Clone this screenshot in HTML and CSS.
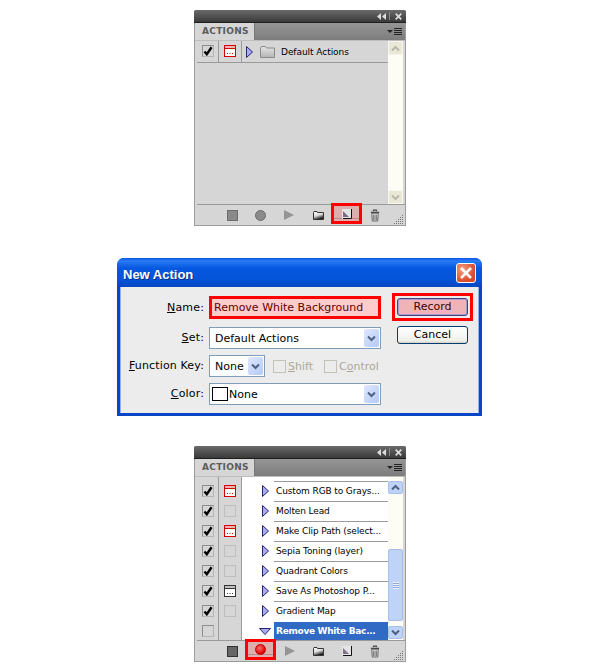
FILE: index.html
```html
<!DOCTYPE html>
<html>

<head>
    <meta charset="utf-8">
    <title>New Action</title>
    <link rel="stylesheet" href="styles.css">
</head>

<body>
    <!-- shared icons -->
    <svg class="defs" width="0" height="0">
        <linearGradient id="folder-fill" x1="0" y1="0" x2="0.4" y2="1">
            <stop offset="0" stop-color="#fff" />
            <stop offset="0.55" stop-color="#ddd" />
            <stop offset="1" stop-color="#222" />
        </linearGradient>
        <linearGradient id="set-fill" x1="0" y1="0" x2="0" y2="1">
            <stop offset="0" stop-color="#e6e6e6" />
            <stop offset="1" stop-color="#b4b4b4" />
        </linearGradient>
        <symbol id="i-check" viewBox="0 0 10 10">
            <path d="M1.5 5.5 L3.8 8.2 L8.6 1.2" fill="none" stroke="#000" stroke-width="2.4" />
        </symbol>
        <symbol id="i-dlg" viewBox="0 0 12 12">
            <rect x="0.5" y="0.5" width="11" height="11" fill="#fff" stroke="currentColor" />
            <rect x="1" y="1" width="10" height="2" fill="currentColor" opacity="0.3" />
            <path d="M1 3.5H11" stroke="currentColor" />
            <path d="M3 8.5h1M5.5 8.5h1M8 8.5h1" stroke="currentColor" />
        </symbol>
        <symbol id="i-tri" viewBox="0 0 7 12">
            <path d="M0.5 0.5 L6.5 6 L0.5 11.5 Z" fill="#aaaaf0" stroke="#26266e" />
        </symbol>
        <symbol id="i-tri-down" viewBox="0 0 12 7">
            <path d="M0.5 0.5 L11.5 0.5 L6 6.5 Z" fill="#aaaaf0" stroke="#26266e" />
        </symbol>
        <symbol id="i-arrow" viewBox="0 0 9 7">
            <path d="M1 1.5 L4.5 5 L8 1.5" fill="none" stroke="#4d6185" stroke-width="2" />
        </symbol>
        <symbol id="i-new" viewBox="0 0 10 10">
            <rect width="10" height="10" fill="#e4e4e4" />
            <path d="M1 2 L7 8 H1 Z" fill="#7d6f8a" />
            <path d="M9.5 0V9.5H1" fill="none" stroke="#111" />
        </symbol>
        <symbol id="i-set-folder" viewBox="0 0 15 12">
            <path d="M0.5 2 L1.5 0.5 H5.5 L6.5 2 H14.5 V11.5 H0.5 Z" fill="url(#set-fill)" stroke="#8a8a8a" />
        </symbol>
        <symbol id="i-folder" viewBox="0 0 11 9">
            <path d="M0.5 1.5 L1 0.5 H4 L4.5 1.5 H10.5 V8.5 H0.5 Z" fill="url(#folder-fill)" stroke="#333" />
        </symbol>
        <symbol id="i-trash" viewBox="0 0 11 14">
            <path d="M1 3.5 H10 M3.5 2 L4 1 H7 L7.5 2" fill="none" stroke="#444" stroke-width="1.4" />
            <path d="M2 4.5 H9 L8.5 13 H2.5 Z" fill="#eee" stroke="#555" />
            <path d="M4 6V12M5.5 6V12M7 6V12" stroke="#666" />
        </symbol>
        <symbol id="i-grip" viewBox="0 0 10 10">
            <path d="M8 1h1v1H8zM6 3h1v1H6zM8 3h1v1H8zM4 5h1v1H4zM6 5h1v1H6zM8 5h1v1H8zM2 7h1v1H2zM4 7h1v1H4zM6 7h1v1H6zM8 7h1v1H8zM0 9h1v1H0zM2 9h1v1H2zM4 9h1v1H4zM6 9h1v1H6zM8 9h1v1H8z" fill="#777" />
        </symbol>
        <symbol id="i-collapse" viewBox="0 0 9 7">
            <path d="M4 0V7L0 3.5ZM9 0V7L5 3.5Z" fill="#ddd" />
        </symbol>
        <symbol id="i-x" viewBox="0 0 7 7">
            <path d="M0.7 0.7 L6.3 6.3 M6.3 0.7 L0.7 6.3" stroke="#ddd" stroke-width="1.7" />
        </symbol>
    </svg>

    <!-- first panel -->
    <div class="panel">
        <div class="titlebar">
            <svg class="collapse"><use href="#i-collapse" /></svg><span class="bar-sep"></span><svg class="close"><use href="#i-x" /></svg>
        </div>
        <div class="tabrow">
            <div class="tab">ACTIONS</div>
            <div class="menu"><span class="menu-tri"></span><span class="menu-lines"></span></div>
        </div>
        <div class="panel-body">
            <div class="list">
                <div class="row row-set">
                    <div class="cell-check"><span class="box"><svg><use href="#i-check" /></svg></span></div>
                    <div class="cell-dlg"><svg class="dlg red"><use href="#i-dlg" /></svg></div>
                    <svg class="tri"><use href="#i-tri" /></svg>
                    <svg class="set-folder"><use href="#i-set-folder" /></svg>
                    <span class="set-name">Default Actions</span>
                </div>
            </div>
            <div class="scroll">
                <div class="sbtn off"><svg class="up"><use href="#i-arrow" /></svg></div>
                <div class="track"></div>
                <div class="sbtn off"><svg><use href="#i-arrow" /></svg></div>
            </div>
        </div>
        <div class="footer">
            <div class="fbtn"><span class="stop"></span></div>
            <div class="fbtn"><span class="rec"></span></div>
            <div class="fbtn"><span class="play"></span></div>
            <div class="fbtn"><svg class="ficon"><use href="#i-folder" /></svg></div>
            <div class="fbtn hl"><svg class="ficon-new"><use href="#i-new" /></svg></div>
            <div class="fbtn"><svg class="ficon-trash"><use href="#i-trash" /></svg></div>
            <svg class="grip"><use href="#i-grip" /></svg>
        </div>
    </div>

    <!-- dialog -->
    <div class="dialog">
        <div class="dialog-title">
            <span class="dialog-name">New Action</span>
            <div class="x-btn"><svg width="14" height="14" viewBox="0 0 14 14"><path d="M2 2 L12 12 M12 2 L2 12" stroke="#fff" stroke-width="2.6" /></svg></div>
        </div>
        <div class="dialog-body">
            <div class="form">
                <label class="name-label"><u>N</u>ame:</label>
                <div class="name-input">Remove White Background</div>

                <label><u>S</u>et:</label>
                <div class="field">Default Actions<span class="drop"><svg><use href="#i-arrow" /></svg></span></div>

                <label><u>F</u>unction Key:</label>
                <div class="fkey-row">
                    <div class="field fkey">None<span class="drop"><svg><use href="#i-arrow" /></svg></span></div>
                    <span class="opt"><span class="optbox"></span><span><u>S</u>hift</span></span>
                    <span class="opt"><span class="optbox"></span><span>C<u>o</u>ntrol</span></span>
                </div>

                <label><u>C</u>olor:</label>
                <div class="field color-field"><span class="swatch"></span>None<span class="drop"><svg><use href="#i-arrow" /></svg></span></div>
            </div>
            <div class="buttons">
                <div class="record-wrap"><div class="btn btn-record">Record</div></div>
                <div class="btn btn-cancel">Cancel</div>
            </div>
        </div>
    </div>

    <!-- second panel -->
    <div class="panel">
        <div class="titlebar">
            <svg class="collapse"><use href="#i-collapse" /></svg><span class="bar-sep"></span><svg class="close"><use href="#i-x" /></svg>
        </div>
        <div class="tabrow">
            <div class="tab">ACTIONS</div>
            <div class="menu"><span class="menu-tri"></span><span class="menu-lines"></span></div>
        </div>
        <div class="panel-body">
            <div class="list list-scrolled">
                <div class="row action">
                    <div class="cell-check"><span class="box"><svg><use href="#i-check" /></svg></span></div>
                    <div class="cell-dlg"><svg class="dlg red"><use href="#i-dlg" /></svg></div>
                    <svg class="tri"><use href="#i-tri" /></svg>
                    <span class="name">Custom RGB to Grays...</span>
                </div>
                <div class="row action">
                    <div class="cell-check"><span class="box"><svg><use href="#i-check" /></svg></span></div>
                    <div class="cell-dlg"><span class="box"></span></div>
                    <svg class="tri"><use href="#i-tri" /></svg>
                    <span class="name">Molten Lead</span>
                </div>
                <div class="row action">
                    <div class="cell-check"><span class="box"><svg><use href="#i-check" /></svg></span></div>
                    <div class="cell-dlg"><svg class="dlg red"><use href="#i-dlg" /></svg></div>
                    <svg class="tri"><use href="#i-tri" /></svg>
                    <span class="name">Make Clip Path (select...</span>
                </div>
                <div class="row action">
                    <div class="cell-check"><span class="box"><svg><use href="#i-check" /></svg></span></div>
                    <div class="cell-dlg"><span class="box"></span></div>
                    <svg class="tri"><use href="#i-tri" /></svg>
                    <span class="name">Sepia Toning (layer)</span>
                </div>
                <div class="row action">
                    <div class="cell-check"><span class="box"><svg><use href="#i-check" /></svg></span></div>
                    <div class="cell-dlg"><span class="box"></span></div>
                    <svg class="tri"><use href="#i-tri" /></svg>
                    <span class="name">Quadrant Colors</span>
                </div>
                <div class="row action">
                    <div class="cell-check"><span class="box"><svg><use href="#i-check" /></svg></span></div>
                    <div class="cell-dlg"><svg class="dlg dark"><use href="#i-dlg" /></svg></div>
                    <svg class="tri"><use href="#i-tri" /></svg>
                    <span class="name">Save As Photoshop P...</span>
                </div>
                <div class="row action">
                    <div class="cell-check"><span class="box"><svg><use href="#i-check" /></svg></span></div>
                    <div class="cell-dlg"><span class="box"></span></div>
                    <svg class="tri"><use href="#i-tri" /></svg>
                    <span class="name">Gradient Map</span>
                </div>
                <div class="row action open">
                    <div class="cell-check"><span class="box"></span></div>
                    <div class="cell-dlg"></div>
                    <svg class="tri-down"><use href="#i-tri-down" /></svg>
                    <span class="name selected">Remove White Bac...</span>
                </div>
            </div>
            <div class="scroll scroll-on">
                <div class="sbtn"><svg class="up"><use href="#i-arrow" /></svg></div>
                <div class="track">
                    <div class="thumb"><span class="thumb-grip"></span></div>
                </div>
                <div class="sbtn"><svg><use href="#i-arrow" /></svg></div>
            </div>
        </div>
        <div class="footer">
            <div class="fbtn"><span class="stop dark-stop"></span></div>
            <div class="fbtn hl"><span class="rec rec-on"></span></div>
            <div class="fbtn"><span class="play"></span></div>
            <div class="fbtn"><svg class="ficon"><use href="#i-folder" /></svg></div>
            <div class="fbtn"><svg class="ficon-new"><use href="#i-new" /></svg></div>
            <div class="fbtn"><svg class="ficon-trash"><use href="#i-trash" /></svg></div>
            <svg class="grip"><use href="#i-grip" /></svg>
        </div>
    </div>
</body>

</html>
```

FILE: styles.css
```css
html {
    background-color: white;
}

body {
    margin: 0;
    padding-top: 10px;
    display: flex;
    flex-direction: column;
    align-items: center;
    font-family: "DejaVu Sans", sans-serif;
    color: #000;
}

svg {
    display: block;
}

.defs {
    position: absolute;
}

/* panels */
.panel {
    width: 212px;
    height: 216px;
    box-sizing: border-box;
    border: 1px solid #9c9c9c;
    border-top: none;
    background: #d6d6d6;
    display: flex;
    flex-direction: column;
    border-radius: 2px 2px 0 0;
}

.titlebar {
    height: 12px;
    margin: 0 -1px;
    background: linear-gradient(#6a6a6a, #3a3a3a);
    border-bottom: 1px solid #1e1e1e;
    display: flex;
    align-items: center;
    justify-content: flex-end;
    padding-right: 4px;
    flex: none;
    border-radius: 2px 2px 0 0;
}

.collapse {
    width: 9px;
    height: 7px;
    margin-right: 3px;
}

.bar-sep {
    width: 1px;
    height: 8px;
    background: #888;
    margin-right: 5px;
}

.close {
    width: 7px;
    height: 7px;
}

.tabrow {
    height: 17px;
    display: flex;
    background: linear-gradient(#969696, #7c7c7c);
    flex: none;
    border-bottom: 1px solid #bdbdbd;
}

.tab {
    width: 60px;
    background: #d6d6d6;
    color: #5c5c5c;
    font-size: 9px;
    font-weight: bold;
    line-height: 17px;
    padding-left: 7px;
    box-sizing: border-box;
    letter-spacing: 0.3px;
    border-right: 1px solid #777;
}

.menu {
    flex: 1;
    display: flex;
    align-items: center;
    justify-content: flex-end;
    padding-right: 3px;
}

.menu-tri {
    border: 3px solid transparent;
    border-top: 3px solid #222;
    border-bottom: none;
    margin-right: 1px;
}

.menu-lines {
    width: 8px;
    height: 7px;
    background: repeating-linear-gradient(#222 0 1px, transparent 1px 2px);
}

.panel-body {
    flex: 1;
    display: flex;
    min-height: 0;
}

.list {
    flex: 1;
    display: flex;
    flex-direction: column;
    margin-left: 2px;
}

.row {
    height: 20px;
    display: flex;
    align-items: center;
    font-size: 9px;
    flex: none;
}

.row-set {
    height: 21px;
    border-bottom: 1px solid #9a9a9a;
}

.cell-check,
.cell-dlg {
    height: 100%;
    display: flex;
    align-items: center;
    justify-content: center;
    box-sizing: border-box;
    border-right: 1px solid #9a9a9a;
    flex: none;
}

.cell-check {
    width: 22px;
}

.cell-dlg {
    width: 23px;
}

.box {
    width: 12px;
    height: 12px;
    margin-bottom: 1px;
    box-sizing: border-box;
    border: 1px solid #b4b4b4;
    border-top-color: #8c8c8c;
    border-left-color: #8c8c8c;
    display: block;
}

.box svg {
    width: 10px;
    height: 10px;
}

.cell-dlg .box {
    border: 1px solid #bdbdbd;
}

.dlg {
    width: 12px;
    height: 12px;
    margin-bottom: 1px;
}

.red {
    color: #d40000;
}

.dark {
    color: #333;
}

.tri {
    width: 7px;
    height: 12px;
    margin-left: 3px;
    flex: none;
}

.row-set .tri {
    margin-left: 4px;
}

.set-folder {
    width: 15px;
    height: 12px;
    margin-left: 7px;
}

.set-name {
    margin-left: 6px;
    font-size: 9px;
    letter-spacing: -0.05px;
    white-space: nowrap;
}

/* list after scrolling */
.list-scrolled {
    padding-top: 4px;
    background: linear-gradient(90deg, #d6d6d6 21px, #9a9a9a 21px 22px, #d6d6d6 22px 44px, #9a9a9a 44px 45px, #fff 45px);
}

.action {
    background: #fff;
}

.action .tri {
    margin-left: 20px;
}

.action .name {
    flex: 1;
    height: 100%;
    box-sizing: border-box;
    border-top: 1px solid #9a9a9a;
    margin-left: 5px;
    line-height: 18px;
    padding-left: 2px;
    letter-spacing: -0.12px;
    white-space: nowrap;
    align-self: stretch;
}

.action .cell-check,
.action .cell-dlg {
    background: #d6d6d6;
}

.tri-down {
    width: 12px;
    height: 7px;
    margin-left: 17px;
    flex: none;
}

.action .name.selected {
    background: #316ac5;
    color: #fff;
    font-weight: bold;
    margin-left: 3px;
    border-top: 1px solid #fff;
    letter-spacing: -0.3px;
}

/* scrollbars */
.scroll {
    width: 15px;
    margin-right: 2px;
    background: #fdfdf6;
    display: flex;
    flex-direction: column;
    flex: none;
}

.track {
    flex: 1;
    display: flex;
    flex-direction: column;
    justify-content: flex-end;
}

.sbtn {
    height: 14px;
    background: #e9e7d6;
    border: 1px solid #f6f6ea;
    box-sizing: border-box;
    border-radius: 2px;
    display: flex;
    align-items: center;
    justify-content: center;
    flex: none;
}

.sbtn svg {
    width: 9px;
    height: 7px;
}

.sbtn .up {
    transform: scaleY(-1);
}

.sbtn.off svg {
    opacity: 0.35;
    filter: grayscale(1);
}

.scroll-on {
    padding: 4px 0 1px;
}

.scroll-on .sbtn {
    height: 13px;
    background: #bfd2f7;
    border: 1px solid #a9bfe8;
}

.thumb {
    height: 72px;
    margin-bottom: 5px;
    background: #bfd2f7;
    border: 1px solid #a9bfe8;
    box-sizing: border-box;
    border-radius: 2px;
    display: flex;
    align-items: center;
    justify-content: center;
}

.thumb-grip {
    width: 6px;
    height: 7px;
    background: repeating-linear-gradient(#eef3fd 0 1px, #8fa8da 1px 2px);
}

/* footer */
.footer {
    height: 21px;
    flex: none;
    margin-left: 2px;
    border-top: 1px solid #9a9a9a;
    display: flex;
    align-items: center;
    padding-left: 21px;
    box-sizing: border-box;
    position: relative;
}

.fbtn {
    width: 28.6px;
    height: 100%;
    display: flex;
    align-items: center;
    justify-content: center;
    flex: none;
    box-sizing: border-box;
}

.fbtn.hl {
    width: 31px;
    height: 21px;
    align-self: flex-start;
    margin: -2px -1.2px 0;
    border: 3px solid #ff0000;
    background: linear-gradient(#dcaeae 0 12px, #b98d8d 12px 13px, #dcaeae 13px);
}

.stop {
    width: 9px;
    height: 9px;
    background: #8a8a8a;
    border: 1px solid #6c6c6c;
}

.dark-stop {
    background: #666;
    border-color: #333;
}

.rec {
    width: 9px;
    height: 9px;
    border-radius: 50%;
    background: #8a8a8a;
    border: 1px solid #6c6c6c;
}

.rec-on {
    background: radial-gradient(circle at 40% 35%, #ff6a6a, #e00000 70%);
    border-color: #c00000;
}

.play {
    border-left: 10px solid #949494;
    border-top: 5.5px solid transparent;
    border-bottom: 5.5px solid transparent;
}

.ficon {
    width: 11px;
    height: 9px;
}

.ficon-new {
    width: 10px;
    height: 10px;
}

.ficon-trash {
    width: 10px;
    height: 13px;
}

.grip {
    width: 10px;
    height: 10px;
    position: absolute;
    right: 1px;
    bottom: 1px;
}

/* dialog */
.dialog {
    width: 365px;
    height: 158px;
    margin: 32px 1px 30px 0;
    box-sizing: border-box;
    background: #0a45c8;
    padding: 0 3px 3px;
    border-radius: 7px 7px 0 0;
    display: flex;
    flex-direction: column;
    font-size: 11px;
}

.dialog-title {
    height: 29px;
    margin: 0 -3px;
    padding: 0 6px;
    background: linear-gradient(#0a56e6 0, #2a7bf5 10%, #0658e0 35%, #0453d8 75%, #0645c0 100%);
    border-radius: 7px 7px 0 0;
    color: #fff;
    font-family: "Liberation Sans", sans-serif;
    font-weight: bold;
    font-size: 13px;
    display: flex;
    align-items: center;
    justify-content: space-between;
    text-shadow: 1px 1px 0 #0a2f8c;
    flex: none;
}

.dialog-name {
    padding-top: 3px;
}

.x-btn {
    width: 20px;
    height: 20px;
    box-sizing: border-box;
    border: 1px solid #fff;
    border-radius: 3px;
    background: radial-gradient(circle at 30% 30%, #f0a080, #d9492a 70%);
    display: flex;
    align-items: center;
    justify-content: center;
}

.dialog-body {
    flex: 1;
    background: #ececec;
    display: flex;
    border: 1px solid #8fb0e8;
    border-top: none;
    border-bottom: none;
}

.form {
    display: grid;
    grid-template-columns: 83px 172px;
    grid-template-rows: 23px 30px 28px 28px;
    column-gap: 5px;
    padding-top: 9px;
    align-items: end;
}

.form label {
    text-align: right;
    line-height: 22px;
    letter-spacing: 0.15px;
    white-space: nowrap;
}

.form .name-label {
    line-height: 23px;
}

.name-input {
    height: 23px;
    box-sizing: border-box;
    border: 3px solid #ff0000;
    background: #ffcccc;
    color: #600000;
    line-height: 17px;
    padding-left: 2px;
    white-space: nowrap;
}

.field {
    height: 22px;
    box-sizing: border-box;
    border: 1px solid #7f9db9;
    background: #fff;
    display: flex;
    align-items: center;
    padding-left: 5px;
    white-space: nowrap;
}

.drop {
    margin-left: auto;
    width: 15px;
    height: 18px;
    margin-right: 1px;
    background: linear-gradient(135deg, #dfe8fd, #b4c9f5);
    border-radius: 2px;
    display: flex;
    align-items: center;
    justify-content: center;
    flex: none;
}

.drop svg {
    width: 9px;
    height: 7px;
}

.fkey-row {
    display: flex;
    align-items: center;
}

.fkey {
    width: 56px;
    flex: none;
}

.opt {
    display: flex;
    align-items: center;
    color: #aca899;
    margin-left: 8px;
    gap: 2px;
    white-space: nowrap;
}

.opt + .opt {
    margin-left: 11px;
}

.optbox {
    width: 13px;
    height: 13px;
    box-sizing: border-box;
    border: 1px solid #c4c2b4;
    display: block;
}

.color-field {
    padding-left: 2px;
}

.swatch {
    width: 16px;
    height: 14px;
    box-sizing: border-box;
    border: 1px solid #000;
    background: #fff;
    margin-right: 1px;
}

.buttons {
    margin-left: 11px;
    padding-top: 6px;
    width: 81px;
    display: flex;
    flex-direction: column;
    align-items: center;
}

.record-wrap {
    border: 3px solid #ff0000;
    padding: 2px;
    margin-bottom: 5px;
}

.btn {
    width: 71px;
    height: 18px;
    box-sizing: border-box;
    border-radius: 3px;
    text-align: center;
    line-height: 16px;
}

.btn-record {
    border: 1px solid #4a3f7c;
    background: #f0b4b8;
    box-shadow: inset 0 0 0 1px #a99bd0;
    color: #400000;
}

.btn-cancel {
    border: 1px solid #003c74;
    background: linear-gradient(#fff, #f0f0ea 85%, #d6d0c5);
}
```
